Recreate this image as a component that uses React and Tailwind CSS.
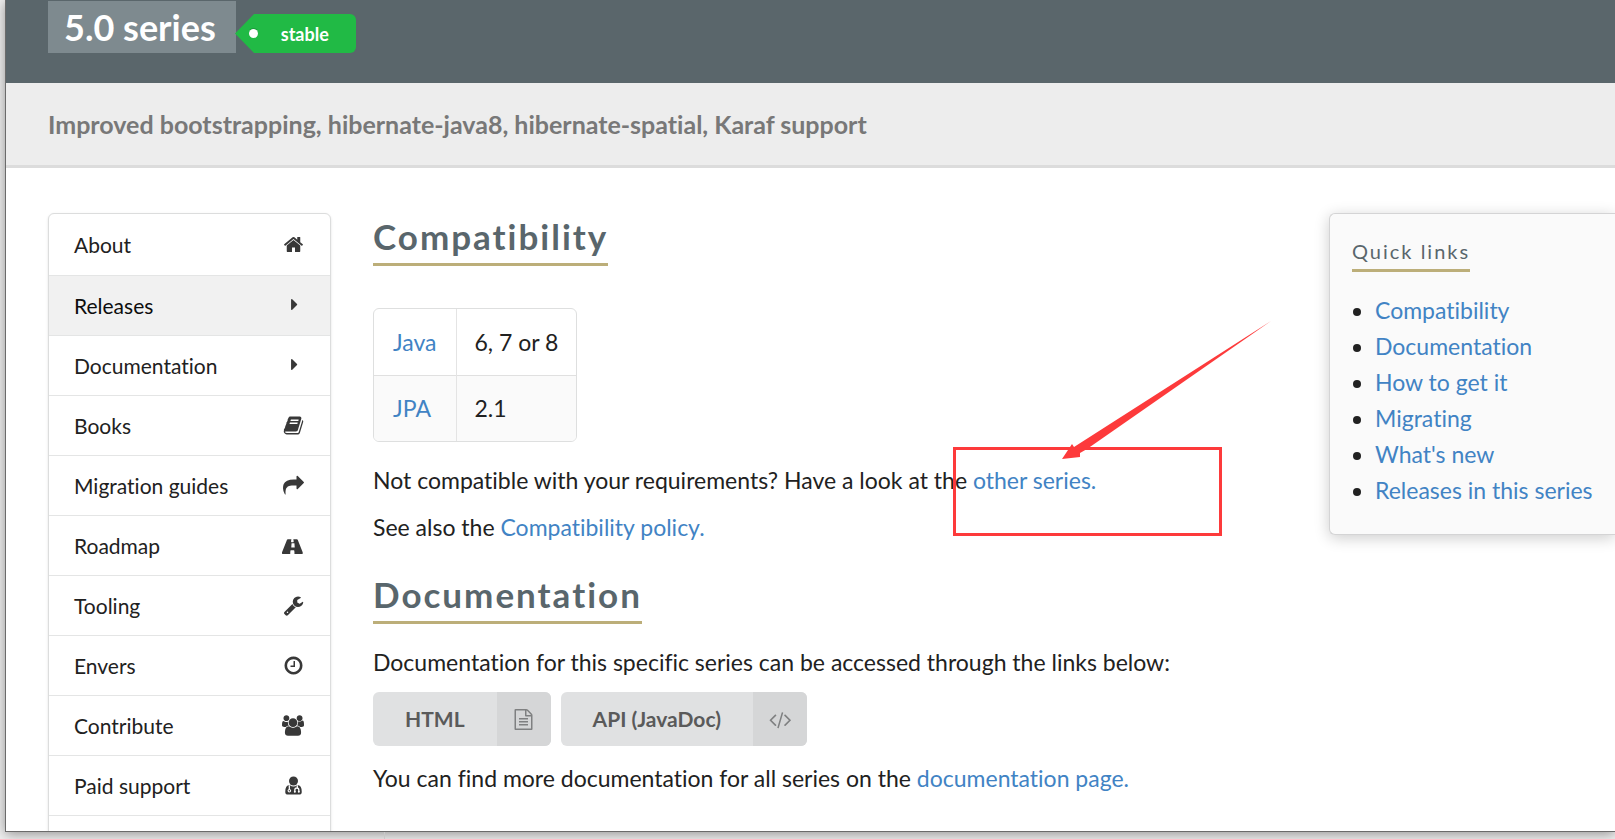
const ICONS = {
  home: [1792, "M1472 992v480q0 26-19 45t-45 19h-384v-384h-256v384h-384q-26 0-45-19t-19-45v-480q0-1 .5-3t.5-3l575-474 575 474q1 2 1 6zm223-69l-62 74q-8 9-21 11h-3q-13 0-21-7l-692-577-692 577q-12 8-24 7-13-2-21-11l-62-74q-8-10-7-23.5t11-21.5l719-599q32-26 76-26t76 26l244 204v-195q0-14 9-23t23-9h192q14 0 23 9t9 23v408l219 182q10 8 11 21.5t-7 23.5z"],
  book: [1792, "M1703 478q40 57 18 129l-275 906q-19 64-76.5 107.5t-122.5 43.5h-923q-77 0-148.5-53.5t-99.5-131.5q-24-67-2-127 0-4 3-27t4-37q1-8-3-21.5t-3-19.5q2-11 8-21t16.5-23.5 16.5-23.5q23-38 45-91.5t30-91.5q3-10 .5-30t-.5-28q3-11 17-28t17-23q21-36 42-92t25-90q1-9-2.5-32t.5-28q4-13 22-30.5t22-22.5q19-26 42.5-84.5t27.5-96.5q1-8-3-25.5t-2-26.5q2-8 9-18t18-23 17-21q8-12 16.5-30.5t15-35 16-36 19.5-32 26.5-23.5 36-11.5 47.5 5.5l-1 3q38-9 51-9h761q74 0 114 56t18 130l-274 906q-36 119-71.5 153.5t-128.5 34.5h-869q-27 0-38 15-11 16-1 43 24 70 144 70h923q29 0 56-15.5t35-41.5l300-987q7-22 5-57 38 15 59 43zm-1064 2q-4 13 2 22.5t20 9.5h608q13 0 25.5-9.5t16.5-22.5l21-64q4-13-2-22.5t-20-9.5h-608q-13 0-25.5 9.5t-16.5 22.5zm-83 256q-4 13 2 22.5t20 9.5h608q13 0 25.5-9.5t16.5-22.5l21-64q4-13-2-22.5t-20-9.5h-608q-13 0-25.5 9.5t-16.5 22.5z"],
  caret: [1792, "M1212 806q0 24-17 41l-408 408q-17 17-41 17t-41-17-17-41v-816q0-24 17-41t41-17 41 17l408 408q17 17 17 41z"],
  share: [1792, "M1792 640q0 26-19 45l-512 512q-19 19-45 19t-45-19-19-45v-256h-224q-98 0-175.5 6t-154 21.5-133 42.5-105.5 69.5-80 101-48.5 138.5-17.5 181q0 55 5 123 0 6 2.5 23.5t2.5 26.5q0 15-8.5 25t-23.5 10q-16 0-28-17-7-9-13-22t-13.5-30-10.5-24q-127-285-127-451 0-199 53-333 162-403 875-403h224v-256q0-26 19-45t45-19 45 19l512 512q19 19 19 45z"],
  road: [1920, "M1111 1047v-4l-24-320q-1-13-11-22.5t-23-9.5h-186q-13 0-23 9.5t-11 22.5l-24 320v4q-1 12 8 20t21 8h244q12 0 21-8t8-20zm703 512q0 73-46 73h-704q13 0 22-9.5t8-22.5l-20-256q-1-13-11-22.5t-23-9.5h-272q-13 0-23 9.5t-11 22.5l-20 256q-1 13 8 22.5t22 9.5h-704q-46 0-46-73 0-54 26-116l417-1044q8-19 26-33t38-14h339q-13 0-23 9.5t-11 22.5l-15 192q-1 14 8 23t22 9h166q13 0 22-9t8-23l-15-192q-1-13-11-22.5t-23-9.5h339q20 0 38 14t26 33l417 1044q26 62 26 116z"],
  wrench: [1792, "M448 1472q0-26-19-45t-45-19-45 19-19 45 19 45 45 19 45-19 19-45zm644-420l-682 682q-37 37-90 37-52 0-91-37l-106-108q-38-36-38-90 0-53 38-91l681-681q39 98 114.5 173.5t173.5 114.5zm634-435q0 39-23 106-47 134-164.5 217.5t-258.5 83.5q-185 0-316.5-131.5t-131.5-316.5 131.5-316.5 316.5-131.5q58 0 121.5 16.5t107.5 46.5q16 11 16 28t-16 28l-293 169v224l193 107q5-3 79-48.5t135.5-81 70.5-35.5q15 0 23.5 10t8.5 25z"],
  clock: [1792, "M1024 544v448q0 14-9 23t-23 9h-320q-14 0-23-9t-9-23v-64q0-14 9-23t23-9h224v-352q0-14 9-23t23-9h64q14 0 23 9t9 23zm416 352q0-148-73-273t-198-198-273-73-273 73-198 198-73 273 73 273 198 198 273 73 273-73 198-198 73-273zm224 0q0 209-103 385.5t-279.5 279.5-385.5 103-385.5-103-279.5-279.5-103-385.5 103-385.5 279.5-279.5 385.5-103 385.5 103 279.5 279.5 103 385.5z"],
  users: [1920, "M593 896q-162 5-265 128h-134q-82 0-138-40.5t-56-118.5q0-353 124-353 6 0 43.5 21t97.5 42.5 119 21.5q67 0 133-23-5 37-5 66 0 159 81 301zm1071 637q0 120-73 189.5t-194 69.5h-874q-121 0-194-69.5t-73-189.5q0-53 3.5-103.5t14-109 26.5-108.5 43-97.5 62-81 85.5-53.5 111.5-20q10 0 43 21.5t73 48 107 48 135 21.5 135-21.5 107-48 73-48 43-21.5q61 0 111.5 20t85.5 53.5 62 81 43 97.5 26.5 108.5 14 109 3.5 103.5zm-1024-1277q0 106-75 181t-181 75-181-75-75-181 75-181 181-75 181 75 75 181zm704 384q0 159-112.5 271.5t-271.5 112.5-271.5-112.5-112.5-271.5 112.5-271.5 271.5-112.5 271.5 112.5 112.5 271.5zm576 225q0 78-56 118.5t-138 40.5h-134q-103-123-265-128 81-142 81-301 0-29-5-66 66 23 133 23 59 0 119-21.5t97.5-42.5 43.5-21q124 0 124 353zm-128-609q0 106-75 181t-181 75-181-75-75-181 75-181 181-75 181 75 75 181z"],
  file: [1792, "M1596 380q28 28 48 76t20 88v1152q0 40-28 68t-68 28h-1344q-40 0-68-28t-28-68v-1600q0-40 28-68t68-28h896q40 0 88 20t76 48zm-444-244v376h376q-10-29-22-41l-313-313q-12-12-41-22zm384 1528v-1024h-416q-40 0-68-28t-28-68v-416h-768v1536h1280zm-1024-864q0-14 9-23t23-9h704q14 0 23 9t9 23v64q0 14-9 23t-23 9h-704q-14 0-23-9t-9-23v-64zm736 224q14 0 23 9t9 23v64q0 14-9 23t-23 9h-704q-14 0-23-9t-9-23v-64q0-14 9-23t23-9h704zm0 256q14 0 23 9t9 23v64q0 14-9 23t-23 9h-704q-14 0-23-9t-9-23v-64q0-14 9-23t23-9h704z"],
  code: [1920, "M617 1399l-50 50q-10 10-23 10t-23-10l-466-466q-10-10-10-23t10-23l466-466q10-10 23-10t23 10l50 50q10 10 10 23t-10 23l-393 393 393 393q10 10 10 23t-10 23zm591-1067l-373 1291q-4 13-15.5 19.5t-23.5 2.5l-62-17q-13-4-19.5-15.5t-2.5-24.5l373-1291q4-13 15.5-19.5t23.5-2.5l62 17q13 4 19.5 15.5t2.5 24.5zm657 651l-466 466q-10 10-23 10t-23-10l-50-50q-10-10-10-23t10-23l393-393-393-393q-10-10-10-23t10-23l50-50q10-10 23-10t23 10l466 466q10 10 10 23t-10 23z"],
};

function DoctorIcon() {
  return (
    <svg viewBox="0 0 1792 1792" className="h-[21px] w-auto" aria-hidden="true">
      <circle cx="896" cy="512" r="384" fill="currentColor" />
      <path d="M560 850Q740 980 896 980T1232 850Q1600 850 1600 1440Q1600 1664 1360 1664H432Q192 1664 192 1440Q192 850 560 850Z" fill="currentColor" />
      <path d="M540 880V1240M1220 880V1090M1010 1420V1270Q1010 1110 1180 1110T1350 1270V1420" fill="none" stroke="#fff" strokeWidth="110" />
      <circle cx="540" cy="1350" r="150" fill="#fff" />
      <circle cx="540" cy="1350" r="60" fill="currentColor" />
      <circle cx="1010" cy="1430" r="85" fill="#fff" />
      <circle cx="1350" cy="1430" r="85" fill="#fff" />
    </svg>
  );
}

function Icon({ name }) {
  if (name === "doctor") return <DoctorIcon />;
  const [w, d] = ICONS[name];
  return (
    <svg viewBox={`0 0 ${w} 1792`} className="h-[21px] w-auto" fill="currentColor" aria-hidden="true">
      <path d={d} />
    </svg>
  );
}

const MENU = [
  ["About", "home"],
  ["Releases", "caret"],
  ["Documentation", "caret"],
  ["Books", "book"],
  ["Migration guides", "share"],
  ["Roadmap", "road"],
  ["Tooling", "wrench"],
  ["Envers", "clock"],
  ["Contribute", "users"],
  ["Paid support", "doctor"],
];

const QUICK = ["Compatibility", "Documentation", "How to get it", "Migrating", "What's new", "Releases in this series"];

function Link({ children }) {
  return <a href="#" className="text-[#4183c4]">{children}</a>;
}

function Heading({ children }) {
  return (
    <h2 className="w-fit border-b-3 border-[#bcae79] pb-1 text-[35px] leading-[46px] font-bold tracking-[2px] text-[#59666c]">
      {children}
    </h2>
  );
}

function DocButton({ children, icon }) {
  return (
    <button type="button" className="flex h-[54px] items-stretch overflow-hidden rounded-md bg-[#e0e1e2] text-[21px] font-bold text-[#5a5a5a]">
      <span className="flex items-center px-8">{children}</span>
      <span className="flex w-[54px] items-center justify-center bg-[#d5d6d7] text-[#7f8081]">
        <Icon name={icon} />
      </span>
    </button>
  );
}

export default function App() {
  return (
    <div className="relative flex h-screen flex-col overflow-hidden bg-[#f0f0f0] pb-[7px] pl-[5px] font-[Lato,sans-serif] text-[23px] leading-9 text-[#212121] [font-variant-ligatures:none]">
      <div className="relative min-h-0 flex-1 overflow-hidden border-b border-l border-[#6b6b6b] bg-white shadow-[0_2px_12px_rgba(0,0,0,0.4)]">
        <header className="flex h-[83px] items-start bg-[#5a666b] pt-px pl-[42px]">
          <h1 className="flex h-[52px] items-center bg-[#7e8a8f] pr-5 pl-4 text-4xl leading-[52px] font-bold text-white">5.0 series</h1>
          <div className="mt-[13px] -ml-px flex h-[39px] text-lg font-bold text-white">
            <svg viewBox="0 0 24 39" className="h-[39px] w-6" aria-hidden="true">
              <path d="M24 0H19L0 19.500L19 39H24Z" fill="#21ba45" />
              <circle cx="18.500" cy="18.500" r="4.500" fill="#1a9a3a" />
              <circle cx="18.500" cy="19.500" r="4.500" fill="#fff" />
            </svg>
            <span className="flex items-center rounded-r-md bg-[#21ba45] pr-[27px] pl-[22px]">stable</span>
          </div>
        </header>
        <div className="border-b-3 border-[#dcdcdc] bg-[#ededed] px-[42px] py-[23px] text-[25px] font-bold text-[#787878]">
          Improved bootstrapping, hibernate-java8, hibernate-spatial, Karaf support
        </div>
        <div className="flex items-start pt-[45px] pl-[42px]">
          <nav className="w-[283px] shrink-0 rounded-md border border-[#dcdddd] bg-white pb-[60px] text-[21px] shadow-sm">
            {MENU.map(([label, icon]) => (
              <a
                href="#"
                key={label}
                className={
                  "flex h-[60px] items-center justify-between border-b border-[#e4e5e5] pr-[26px] pl-[25px] first:h-[62px] first:rounded-t-md " +
                  (label === "Releases" ? "bg-[#f1f1f1] text-[#0d0d0d]" : "")
                }
              >
                {label}
                <span className="flex w-[22px] justify-center text-[#383838]">
                  <Icon name={icon} />
                </span>
              </a>
            ))}
          </nav>
          <main className="relative ml-[42px] min-w-0 flex-1">
            <Heading>Compatibility</Heading>
            <div className="mt-[42px] w-fit overflow-hidden rounded-md border border-[#dedfdf]">
              <table>
                <tbody>
                  <tr className="h-[66px] border-b border-[#e0e0e0]">
                    <td className="border-r border-[#e4e4e4] px-[19px]"><Link>Java</Link></td>
                    <td className="px-[18px]">6, 7 or 8</td>
                  </tr>
                  <tr className="h-[66px] bg-[#fafafa]">
                    <td className="border-r border-[#e4e4e4] px-[19px]"><Link>JPA</Link></td>
                    <td className="px-[18px]">2.1</td>
                  </tr>
                </tbody>
              </table>
            </div>
            <p className="mt-5">Not compatible with your requirements? Have a look at the <Link>other series.</Link></p>
            <p className="mt-[11px]">See also the <Link>Compatibility policy.</Link></p>
            <div className="mt-[26px]"><Heading>Documentation</Heading></div>
            <p className="mt-5">Documentation for this specific series can be accessed through the links below:</p>
            <div className="mt-3 flex gap-[10px]">
              <DocButton icon="file">HTML</DocButton>
              <DocButton icon="code">API (JavaDoc)</DocButton>
            </div>
            <p className="mt-[14px]">You can find more documentation for all series on the <Link>documentation page.</Link></p>
            <svg viewBox="0 0 330 230" className="pointer-events-none absolute top-[102px] left-[573px] h-[230px] w-[330px]" aria-hidden="true">
              <rect x="8.500" y="133.500" width="266" height="86" fill="none" stroke="#fd3a3b" strokeWidth="3" />
              <path d="M325 6L141 134L134 138L134 142L116 144L126 129L128 132Z" fill="#fd3a3b" />
            </svg>
          </main>
          <aside className="w-[286px] shrink-0 rounded-l-md border border-r-0 border-[#d4d4d5] bg-[#fafafa] px-[22px] pt-[19px] pb-[26px] shadow-[0_3px_15px_rgba(0,0,0,0.2)]">
            <h3 className="w-fit border-b-3 border-[#bcae79] text-xl leading-9 tracking-[2px] text-[#59666c]">Quick links</h3>
            <ul className="mt-5 list-disc pl-[23px] marker:text-[#212121]">
              {QUICK.map((q) => (
                <li key={q} className="whitespace-nowrap"><Link>{q}</Link></li>
              ))}
            </ul>
          </aside>
        </div>
      </div>
      <div className="absolute bottom-0 left-96 h-[7px] w-px bg-[#c8c8c8]" />
    </div>
  );
}
